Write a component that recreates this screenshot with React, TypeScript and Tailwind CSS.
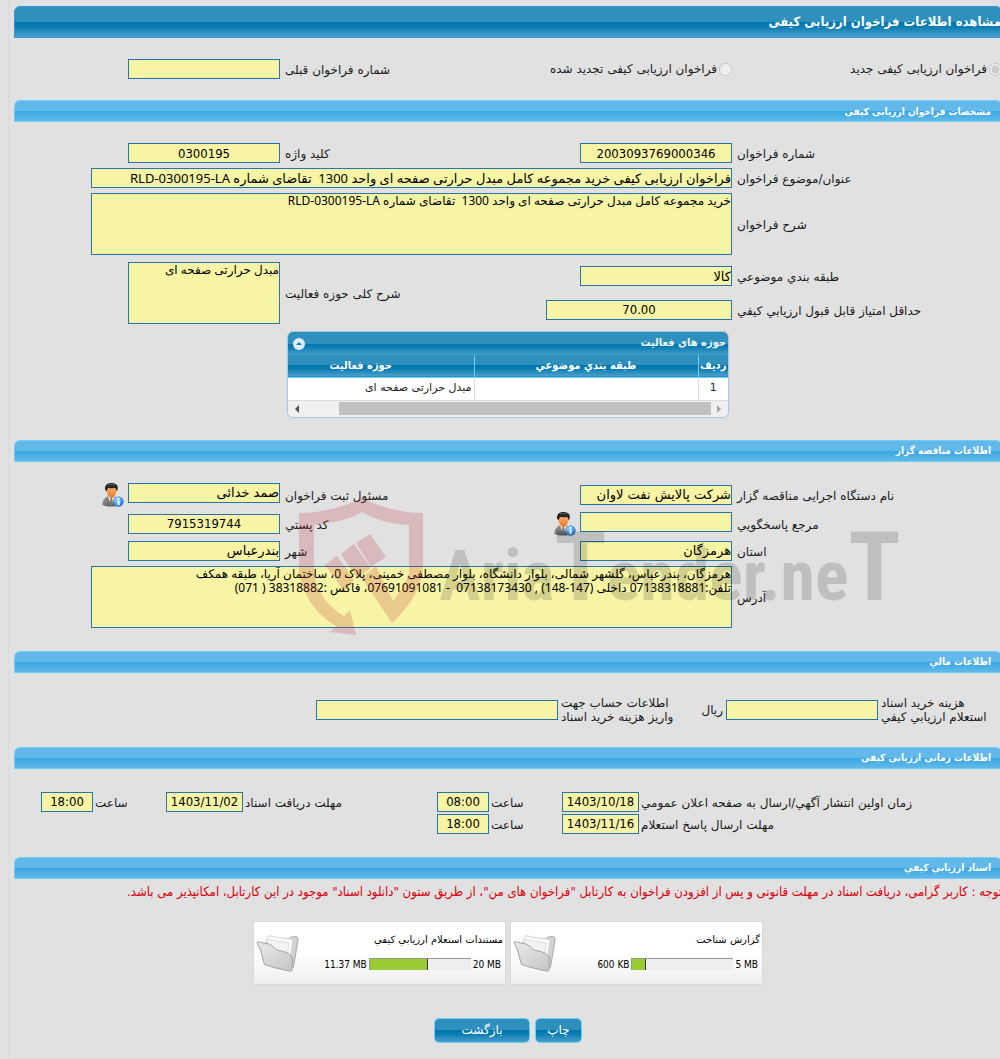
import { useState, type ReactNode } from "react";

const SANS = "font-['DejaVu_Sans',sans-serif]";
const CONDENSED = "font-['DejaVu_Sans_Condensed','DejaVu_Sans',sans-serif]";
// Latin from Noto, Persian falls through to DejaVu
const MIXED = "font-['Noto_Sans','DejaVu_Sans',sans-serif]";

const DARK_BAR =
  "bg-[linear-gradient(to_bottom,#2f90be_0%,#2f90be_50%,#0076ae_50%,#0a7cb2_65%,#4a9fca_100%)]";
const LIGHT_BAR =
  "bg-[linear-gradient(to_bottom,#62b9e9_0%,#62b9e9_48%,#37a6e1_50%,#62b9e9_100%)]";

const BOX =
  "block border border-[#2476ab] bg-[#f7f5a5] text-black outline-none rounded-none";

const FORM_GRID =
  "grid grid-cols-[265px_minmax(0,1fr)_150px_266px] gap-[5px] items-center";

type FieldProps = {
  id: string;
  value?: string;
  className?: string;
  center?: boolean;
};

function Field({ id, value = "", className = "w-[152px]", center }: FieldProps) {
  return (
    <input
      id={id}
      type="text"
      readOnly
      defaultValue={value}
      className={`${BOX} h-5 px-0 text-[13px] ${center ? `text-center ${CONDENSED}` : ""} ${className}`}
    />
  );
}

function Area({ id, value, className = "w-[152px]" }: FieldProps) {
  return (
    <textarea
      id={id}
      readOnly
      defaultValue={value}
      className={`${BOX} ${MIXED} h-[62px] resize-none overflow-hidden p-0 text-[12px] leading-[14px] ${className}`}
    />
  );
}

function Label({ htmlFor, children }: { htmlFor: string; children: ReactNode }) {
  return (
    <label htmlFor={htmlFor} className="block text-left text-[12px] leading-[14px] whitespace-nowrap pt-0.5">
      {children}
    </label>
  );
}

function SectionBar({ children }: { children: ReactNode }) {
  return (
    <h2
      className={`flex h-[22px] items-center rounded-t-md border border-[#6ecff6] px-2.5 text-[10px] font-bold text-white ${CONDENSED} ${LIGHT_BAR}`}
    >
      {children}
    </h2>
  );
}

function PersonIcon({ id }: { id: string }) {
  return (
    <svg width="22" height="24" viewBox="0 0 22 24" aria-hidden="true">
      <defs>
        <linearGradient id={`${id}-suit`} x1="0" y1="0" x2="1" y2="1">
          <stop offset="0" stopColor="#9a9a9a" />
          <stop offset="1" stopColor="#4c4c4c" />
        </linearGradient>
        <linearGradient id={`${id}-face`} x1="0" y1="0" x2="0" y2="1">
          <stop offset="0" stopColor="#ffb067" />
          <stop offset="1" stopColor="#e8752c" />
        </linearGradient>
        <radialGradient id={`${id}-info`} cx="0.35" cy="0.3" r="0.8">
          <stop offset="0" stopColor="#8fd0fb" />
          <stop offset="1" stopColor="#1673cc" />
        </radialGradient>
      </defs>
      <path d="M0.5 22c0-5 2-7.500 6-9h5c4 1.500 6 4 6 9c-4 2-13 2-17 0z" fill={`url(#${id}-suit)`} />
      <path d="M6 13l3.200 9.500L13 13z" fill="#f4f4f4" />
      <path d="M8.500 14.500h1.600l.8 6-1.500 2.500-1.500-2.500z" fill="#777" />
      <path d="M4.500 6c0 5 2.200 9 5 9s5-4 5-9c-1-2-9-2-10 0z" fill={`url(#${id}-face)`} />
      <path d="M3.200 7C2.200 2.500 5.200 0 9.500 0s7.300 2 6 7l-1 1.500c0-2-.6-3-1.700-3.500-2.500.5-4.700.4-6.400 0-1 .8-1.500 1.800-1.600 3.500z" fill="#262626" />
      <path d="M6 2.200C8 1 11 1 13 2.200" stroke="#777" strokeWidth="0.8" fill="none" />
      <circle cx="16.500" cy="18.500" r="5.200" fill={`url(#${id}-info)`} />
      <rect x="15.600" y="17.600" width="2" height="4.400" fill="#fff" />
      <rect x="15.600" y="14.900" width="2" height="1.800" fill="#fff" />
    </svg>
  );
}

function FolderIcon({ id }: { id: string }) {
  return (
    <svg width="44" height="40" viewBox="0 0 44 40" aria-hidden="true">
      <defs>
        <linearGradient id={`${id}-front`} x1="0" y1="0" x2="1" y2="1">
          <stop offset="0" stopColor="#e9e9e9" />
          <stop offset="1" stopColor="#c6c6c6" />
        </linearGradient>
      </defs>
      <path
        d="M31 5c2 0 3-1.500 5-2l3.500-.5c2 0 3 1.500 2.500 3.500L37.500 33l-3 2.500z"
        fill="#d2d2d2"
        stroke="#a8a8a8"
      />
      <path d="M9 12l1-6 3-4.500 6 1.500 18 2.500-4 26z" fill="#fafafa" stroke="#d6d6d6" />
      <path d="M10 12l2-7 5 1.500 16 2.500-2 14z" fill="#f3f3f3" stroke="#e0e0e0" />
      <path
        d="M1 9c0-1 1-1.500 2-1.200 4 1.700 8 .7 12 3.200 3 2 4 4.500 8 5.500 4 .8 10 1.500 13.500 7.500L36 35.500c0 1.500-1 2-2.500 1.600-8-2-17-3.500-25-6.600C6.500 24 5.500 16 1 9z"
        fill={`url(#${id}-front)`}
        stroke="#a2a2a2"
      />
    </svg>
  );
}

function Watermark() {
  return (
    <div
      dir="ltr"
      aria-hidden="true"
      className="pointer-events-none absolute top-[15px] left-[285px] flex items-center gap-3.5"
    >
      <svg width="126" height="138" viewBox="0 0 126 138" fill="#be323c" opacity="0.22">
        <path d="M63 0C45 9 22 15 0 15v60c5 25 18 42 37 53l-6 6 26 3-6-25-6 6C30 109 18 95 15 75V27C33 25 50 22 63 14c13 8 29 12 47 13v48c-4 12-10 20-16 28L77 68l-14 12 30 45c16-15 31-35 31-60V15C102 15 81 9 63 0z" />
        <path d="M57 45l14-9 16 23-15 10zM42 56l13-10 17 24-14 10zM26 67l12-9 17 24-9 12z" />
      </svg>
      <span className="font-['Liberation_Sans_Narrow','Roboto_Condensed',Roboto,sans-serif] text-[70px] leading-none font-bold whitespace-nowrap text-black/15">
        Aria<span className="text-[96px]">T</span>ender.ne<span className="text-[96px]">T</span>
      </span>
    </div>
  );
}

function ActivityTable() {
  const [open, setOpen] = useState(true);

  return (
    <div className="mr-[273px] w-[442px] overflow-hidden rounded-md border border-[#a6c9e2] bg-[#f0f0f0] text-[11px]">
      <div className={`flex h-[23px] items-center justify-between pr-0.5 pl-[5px] ${DARK_BAR}`}>
        <span className={`font-bold text-[#eaf5f7] ${CONDENSED}`}>حوزه های فعالیت</span>
        <button
          type="button"
          aria-label="حوزه های فعالیت"
          aria-expanded={open}
          onClick={() => setOpen((o) => !o)}
          className="flex size-3 items-center justify-center rounded-full bg-[#dcecf8]"
        >
          <svg width="6" height="3" viewBox="0 0 6 3" aria-hidden="true">
            <path d="M0 3l3-3 3 3z" fill="#1c7fb5" />
          </svg>
        </button>
      </div>
      {open && (
        <>
          <table className="w-full table-fixed border-collapse bg-white">
            <thead>
              <tr className={`h-[22px] border-b border-[#6ecff6] text-white ${CONDENSED} ${DARK_BAR}`}>
                <th className="w-[30px] border-l border-[#6ecff6] p-0">ردیف</th>
                <th className="border-l border-[#6ecff6] p-0">طبقه بندي موضوعي</th>
                <th className="w-[186px] p-0 pr-10">حوزه فعالیت</th>
              </tr>
            </thead>
            <tbody>
              <tr className="h-[23px] border-b border-[#dcdcdc] text-[#222]">
                <td className="border-l border-[#dcdcdc] p-0 text-center">1</td>
                <td className="border-l border-[#dcdcdc] p-0" />
                <td className="p-0 pr-0.5">مبدل حرارتی صفحه ای</td>
              </tr>
            </tbody>
          </table>
          <div className="flex h-4 items-center gap-1.5 px-1.5">
            <svg width="5" height="8" viewBox="0 0 5 8" aria-hidden="true">
              <path d="M0 0l4 4-4 4z" fill="#a3a3a3" />
            </svg>
            <div className="h-[13px] w-[372px] bg-[#c1c1c1]" />
            <svg className="mr-auto" width="5" height="8" viewBox="0 0 5 8" aria-hidden="true">
              <path d="M5 0L1 4l4 4z" fill="#505050" />
            </svg>
          </div>
        </>
      )}
    </div>
  );
}

const DOCS = [
  { id: "doc1", title: "گزارش شناخت", max: "5 MB", used: "600 KB", percent: 13 },
  { id: "doc2", title: "مستندات استعلام ارزیابي کیفي", max: "20 MB", used: "11.37 MB", percent: 58 },
];

function DocCard({ id, title, max, used, percent }: (typeof DOCS)[number]) {
  return (
    <article className="flex h-16 w-[253px] justify-between border border-[#dadada] bg-linear-to-b from-white from-50% to-[#eeeeee] pl-0.5">
      <div className="flex flex-col gap-2.5 pt-2.5 pr-0.5 text-[10px] leading-[15px] text-black">
        <h3>{title}</h3>
        <div className={`flex items-center gap-0.5 pr-0.5 ${CONDENSED}`}>
          <span dir="ltr">{max}</span>
          <div dir="ltr" className="h-3 w-[102px] border-t border-l border-[#999] bg-[#eeeeee]">
            <div className="h-full border-r border-[#333] bg-[#9acb33]" style={{ width: `${percent}%` }} />
          </div>
          <span dir="ltr">{used}</span>
        </div>
      </div>
      <div className="pt-3">
        <FolderIcon id={id} />
      </div>
    </article>
  );
}

const BUTTON = `flex h-[25px] items-center justify-center rounded-[5px] border border-[#6ecff6] text-[12px] text-white ${DARK_BAR}`;

const TIME_GRID =
  "grid grid-cols-[minmax(0,1fr)_77px_69px_52px_190px_77px_69px_52px] gap-0.5 items-center pl-[27px]";

export default function App() {
  return (
    <div dir="rtl" className={`overflow-x-hidden bg-[#e1e1e1] pb-px pl-2 text-[#1a1a1a] ${SANS}`}>
      <main className="-mr-0.5 border-b border-l border-[#dadada] pt-1.5 pb-[15px] pl-[5px]">
        <h1
          className={`flex h-8 items-center rounded-t-md border border-[#2b92e4] text-[13px] font-bold text-white ${CONDENSED} ${DARK_BAR}`}
        >
          مشاهده اطلاعات فراخوان ارزیابی کیفی
        </h1>

        <div className={`${FORM_GRID} mt-[21px] mb-[21px]`}>
          <label className="flex items-center gap-0.5 text-[12px]">
            <input type="radio" name="kind" disabled defaultChecked className="size-[13px]" />
            فراخوان ارزیابی کیفی جدید
          </label>
          <label className="flex items-center gap-0.5 text-[12px]">
            <input type="radio" name="kind" disabled className="size-[13px]" />
            فراخوان ارزیابی کیفی تجدید شده
          </label>
          <Label htmlFor="prev">شماره فراخوان قبلی</Label>
          <Field id="prev" />
        </div>

        <SectionBar>مشخصات فراخوان ارزیابی کیفی</SectionBar>
        <div className={`${FORM_GRID} mt-[21px]`}>
          <Label htmlFor="number">شماره فراخوان</Label>
          <Field id="number" value="2003093769000346" center />
          <Label htmlFor="keyword">کلید واژه</Label>
          <Field id="keyword" value="0300195" center />

          <Label htmlFor="subject">عنوان/موضوع فراخوان</Label>
          <div className="col-span-3">
            <Field
              id="subject"
              className={`w-[641px] ${MIXED}`}
              value="فراخوان ارزیابی کیفی خرید مجموعه کامل مبدل حرارتی صفحه ای واحد 1300  تقاضای شماره RLD-0300195-LA"
            />
          </div>

          <Label htmlFor="desc">شرح فراخوان</Label>
          <div className="col-span-3">
            <Area
              id="desc"
              className="w-[641px]"
              value="خرید مجموعه کامل مبدل حرارتی صفحه ای واحد 1300  تقاضای شماره RLD-0300195-LA"
            />
          </div>
        </div>

        <div className={`${FORM_GRID} mt-[7px] mb-[7px]`}>
          <Label htmlFor="category">طبقه بندي موضوعي</Label>
          <Field id="category" value="کالا" />
          <div className="row-span-2">
            <Label htmlFor="scope">شرح کلی حوزه فعالیت</Label>
          </div>
          <div className="row-span-2">
            <Area id="scope" value="مبدل حرارتی صفحه ای" />
          </div>
          <Label htmlFor="score">حداقل امتیاز قابل قبول ارزیابي کیفي</Label>
          <Field id="score" value="70.00" className="w-[186px]" center />
        </div>

        <ActivityTable />

        <div className="mt-[22px]">
          <SectionBar>اطلاعات مناقصه گزار</SectionBar>
        </div>
        <section className="relative mt-[21px]">
          <div className={FORM_GRID}>
            <Label htmlFor="org">نام دستگاه اجرایی مناقصه گزار</Label>
            <Field id="org" value="شرکت پالایش نفت لاوان" />
            <Label htmlFor="owner">مسئول ثبت فراخوان</Label>
            <div className="flex items-start gap-1">
              <Field id="owner" value="صمد خدائی" />
              <PersonIcon id="owner-icon" />
            </div>

            <Label htmlFor="contact">مرجع پاسخگویي</Label>
            <div className="flex items-start gap-1">
              <Field id="contact" />
              <PersonIcon id="contact-icon" />
            </div>
            <Label htmlFor="postal">کد پستي</Label>
            <Field id="postal" value="7915319744" center />

            <Label htmlFor="province">استان</Label>
            <Field id="province" value="هرمزگان" />
            <Label htmlFor="city">شهر</Label>
            <Field id="city" value="بندرعباس" />

            <Label htmlFor="address">آدرس</Label>
            <div className="col-span-3">
              <Area
                id="address"
                className="w-[641px]"
                value={
                  "هرمزگان، بندرعباس، گلشهر شمالی، بلوار دانشگاه، بلوار مصطفی خمینی، پلاک 0، ساختمان آریا، طبقه همکف\nتلفن:07138318881 داخلی (147-148) , 07138173430  - 07691091081، فاکس :38318882 ( 071)"
                }
              />
            </div>
          </div>
          <Watermark />
        </section>

        <div className="mt-[23px]">
          <SectionBar>اطلاعات مالي</SectionBar>
        </div>
        <div className="mt-[23px] mb-[23px] flex items-center gap-[3px]">
          <label htmlFor="fee" className="w-[121px] text-left text-[12px] leading-[14px]">
            <span className="block whitespace-nowrap">هزینه خرید اسناد</span>
            <span className="block whitespace-nowrap">استعلام ارزیابي کیفي</span>
          </label>
          <Field id="fee" />
          <span className="w-10 text-[12px]">ریال</span>
          <label htmlFor="account" className="w-[119px] text-left text-[12px] leading-[14px]">
            <span className="block whitespace-nowrap">اطلاعات حساب جهت</span>
            <span className="block whitespace-nowrap">واریز هزینه خرید اسناد</span>
          </label>
          <Field id="account" className="w-[242px]" />
        </div>

        <SectionBar>اطلاعات زمانی ارزیابی کیفی</SectionBar>
        <div className={`${TIME_GRID} mt-[23px] mb-[23px]`}>
          <Label htmlFor="pub-date">زمان اولین انتشار آگهي/ارسال به صفحه اعلان عمومي</Label>
          <Field id="pub-date" value="1403/10/18" className="w-full" center />
          <Label htmlFor="pub-time">ساعت</Label>
          <Field id="pub-time" value="08:00" className="w-full" center />
          <Label htmlFor="doc-date">مهلت دریافت اسناد</Label>
          <Field id="doc-date" value="1403/11/02" className="w-full" center />
          <Label htmlFor="doc-time">ساعت</Label>
          <Field id="doc-time" value="18:00" className="w-full" center />

          <Label htmlFor="reply-date">مهلت ارسال پاسخ استعلام</Label>
          <Field id="reply-date" value="1403/11/16" className="w-full" center />
          <Label htmlFor="reply-time">ساعت</Label>
          <Field id="reply-time" value="18:00" className="w-full" center />
        </div>

        <SectionBar>اسناد ارزیابي کیفي</SectionBar>
        <p className={`mt-1 text-[13px] leading-[18px] whitespace-nowrap text-[#d9000d] ${CONDENSED}`}>
          توجه : کاربر گرامی، دریافت اسناد در مهلت قانونی و پس از افزودن فراخوان به کارتابل &quot;فراخوان های من&quot;، از
          طریق ستون &quot;دانلود اسناد&quot; موجود در این کارتابل، امکانپذیر می باشد.
        </p>

        <div className="mt-5 flex justify-center gap-1">
          {DOCS.map((doc) => (
            <DocCard key={doc.id} {...doc} />
          ))}
        </div>

        <div className="mt-[33px] flex justify-center gap-[5px]">
          <button type="button" className={`${BUTTON} w-[47px]`}>
            چاپ
          </button>
          <button type="button" className={`${BUTTON} w-24`}>
            بازگشت
          </button>
        </div>
      </main>
    </div>
  );
}
